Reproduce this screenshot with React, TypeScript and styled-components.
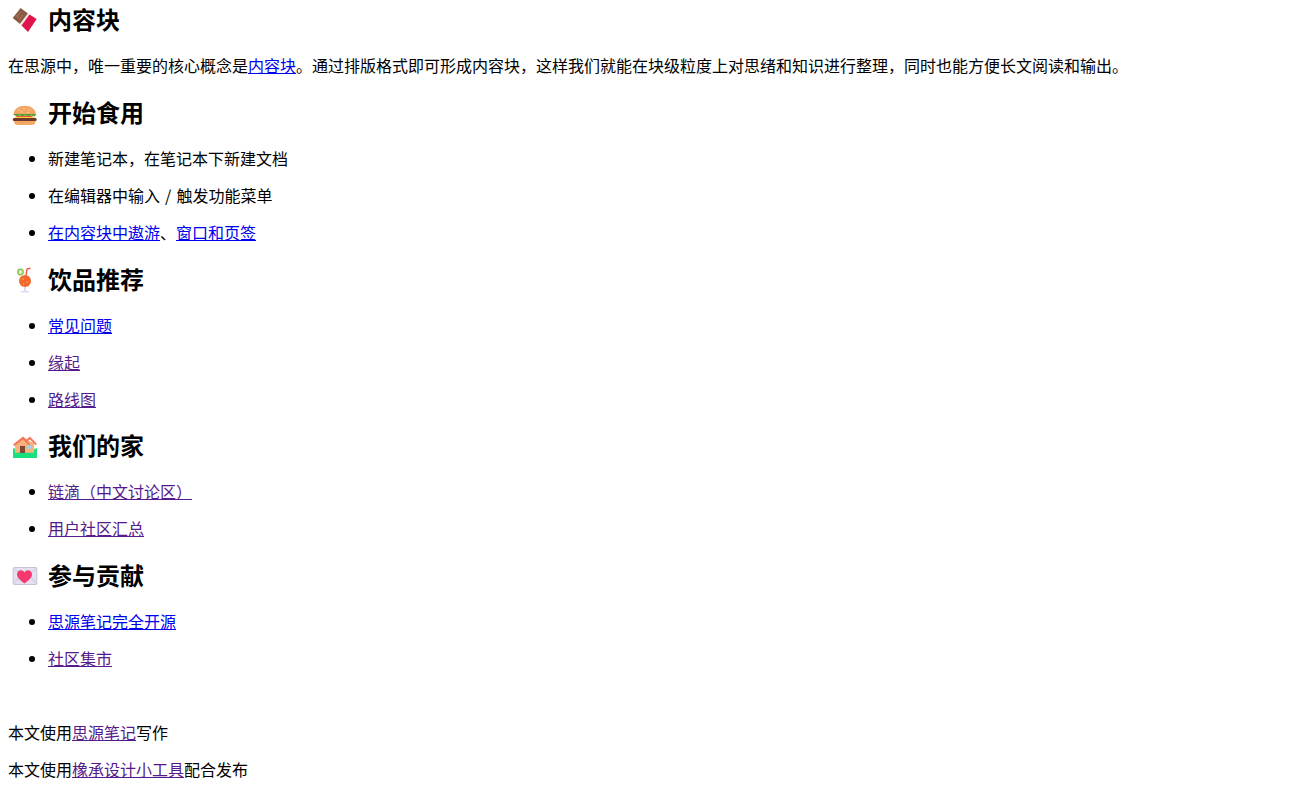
import React from "react";
import styled, { createGlobalStyle } from "styled-components";

const GlobalStyle = createGlobalStyle`
  html, body {
    margin: 0;
    background: #fff;
  }
  body {
    padding: 8px;
    color: #000;
    font-family: "Noto Sans CJK SC", "Liberation Serif", serif;
    font-size: 16px;
    font-weight: 400;
    line-height: 21px;
  }
`;

const Heading = styled.h2`
  display: flex;
  align-items: center;
  gap: 8px;
  height: 32px;
  margin: 19.92px 0;
  font-size: 24px;
  font-weight: 700;
  line-height: 32px;

  &:first-child {
    margin-top: -5px;
  }
`;

const Emoji = styled.svg`
  display: block;
  flex: none;
  width: 32px;
  height: 32px;
  margin-top: 4px;
`;

const Para = styled.p`
  margin: 16px 0;
  height: 21px;
  white-space: nowrap;
`;

const List = styled.ul`
  margin: 16px 0;
  padding-left: 40px;
`;

const Item = styled.li<{ $wide?: boolean }>`
  margin: 16px 0;
  height: 21px;
  word-spacing: ${(p) => (p.$wide ? "1.5px" : "0")};
`;

const Link = styled.a<{ $visited?: boolean }>`
  color: ${(p) => (p.$visited ? "#551a8b" : "#0000ee")};
  text-decoration: underline;
`;

function Chocolate() {
  return (
    <Emoji viewBox="0 0 32 32">
      <path d="M12.600 3 20 8.500 12 19 4.700 13z" fill="#8a5a44" />
      <path d="M9 11.500 13 7M12 14l3-4M7.500 10l5 4" stroke="#a8775f" strokeWidth="1" fill="none" />
      <path d="M20 8.500 21.500 9.500 13.500 20.500 12 19z" fill="#efe3da" />
      <path d="M21.500 9.500 28.700 14 20 27 13.500 20.500z" fill="#e0144c" />
    </Emoji>
  );
}

function Burger() {
  return (
    <Emoji viewBox="0 0 32 32">
      <path d="M5.500 17c0-6 5-9.300 11.200-9.300S28 11 28 17z" fill="#f4a764" />
      <circle cx="11" cy="12" r=".7" fill="#ffdcae" />
      <circle cx="16" cy="10.500" r=".7" fill="#ffdcae" />
      <circle cx="21" cy="12" r=".7" fill="#ffdcae" />
      <circle cx="14" cy="14" r=".7" fill="#ffdcae" />
      <circle cx="20" cy="14.500" r=".7" fill="#ffdcae" />
      <path d="M5 16h23.500l-2 2.500-3-1-3 1-3-1-3 1-3-1-3 1z" fill="#5c9e31" />
      <path d="M8 18h17l-1.500 1.500h-14z" fill="#f0583a" />
      <path d="M6 19h21.500l-2 1H7.500z" fill="#ffc83d" />
      <rect x="4.700" y="20" width="24" height="3" rx="1.500" fill="#6b3a2a" />
      <path d="M6 23h21.500c0 2.800-1.500 4-4 4H10c-2.500 0-4-1.200-4-4z" fill="#f4a764" />
    </Emoji>
  );
}

function Drink() {
  return (
    <Emoji viewBox="0 0 32 32">
      <circle cx="12.500" cy="7" r="3.400" fill="#8bc34a" />
      <circle cx="12.500" cy="7" r="2" fill="#dcedc8" />
      <path d="M18 11 19 4 22.500 3.200" stroke="#e8503a" strokeWidth="1.300" fill="none" />
      <circle cx="17" cy="16" r="6" fill="#f4682c" />
      <circle cx="15" cy="14" r=".7" fill="#ffb74d" />
      <circle cx="19" cy="17" r=".7" fill="#ffb74d" />
      <circle cx="15.500" cy="19" r=".7" fill="#ffb74d" />
      <path d="M16.200 22h1.600v4h-1.600z" fill="#cfd6f5" />
      <path d="M13 26h8v1.500h-8z" fill="#d6dcf5" />
    </Emoji>
  );
}

function House() {
  return (
    <Emoji viewBox="0 0 32 32">
      <path d="M5 17c4 2 8 3 12 3s8-1 12-3v10H5z" fill="#17e07f" />
      <path d="M7 12 15 6l6 4 5 2v9.700H7z" fill="#f8b27a" />
      <path d="M5 13.500 15 5.500l3.500 3L22 5.500l7 7.500-1.300 1.300L22 8.500l-2.500 2 3 3-1.300 1.300L15 8.500 6.300 15z" fill="#f07b5a" />
      <rect x="12" y="15" width="5" height="7" fill="#7b4a36" />
      <rect x="19" y="14" width="4" height="4" rx="1" fill="#9fd4f0" />
    </Emoji>
  );
}

function Letter() {
  return (
    <Emoji viewBox="0 0 32 32">
      <rect x="5.200" y="6.500" width="23.600" height="17" rx="1" fill="#e4e0ef" stroke="#c8c2d8" strokeWidth="1" />
      <path d="M5.500 7.500 17 16.500 28.500 7.500M5.500 23 13 14M28.500 23 21 14" stroke="#c4bdd6" strokeWidth=".8" fill="none" />
      <path d="M16.500 22.500c-3.200-2.600-7.500-5.500-7.500-9 0-2.400 1.800-4.300 3.900-4.300 1.500 0 2.800.8 3.600 2.200.8-1.400 2.100-2.200 3.600-2.200 2.100 0 3.900 1.900 3.900 4.300 0 3.500-4.300 6.400-7.500 9z" fill="#f7386e" />
    </Emoji>
  );
}

export default function App() {
  return (
    <>
      <GlobalStyle />
      <Heading>
        <Chocolate />
        内容块
      </Heading>
      <Para>
        在思源中，唯一重要的核心概念是<Link href="#a">内容块</Link>
        。通过排版格式即可形成内容块，这样我们就能在块级粒度上对思绪和知识进行整理，同时也能方便长文阅读和输出。
      </Para>
      <Heading>
        <Burger />
        开始食用
      </Heading>
      <List>
        <Item>新建笔记本，在笔记本下新建文档</Item>
        <Item $wide>在编辑器中输入 / 触发功能菜单</Item>
        <Item>
          <Link href="#b">在内容块中遨游</Link>、<Link href="#c">窗口和页签</Link>
        </Item>
      </List>
      <Heading>
        <Drink />
        饮品推荐
      </Heading>
      <List>
        <Item>
          <Link href="#d">常见问题</Link>
        </Item>
        <Item>
          <Link $visited href="#e">缘起</Link>
        </Item>
        <Item>
          <Link $visited href="#f">路线图</Link>
        </Item>
      </List>
      <Heading>
        <House />
        我们的家
      </Heading>
      <List>
        <Item>
          <Link $visited href="#g">链滴（中文讨论区）</Link>
        </Item>
        <Item>
          <Link $visited href="#h">用户社区汇总</Link>
        </Item>
      </List>
      <Heading>
        <Letter />
        参与贡献
      </Heading>
      <List>
        <Item>
          <Link href="#i">思源笔记完全开源</Link>
        </Item>
        <Item>
          <Link $visited href="#j">社区集市</Link>
        </Item>
      </List>
      <Para />
      <Para>
        本文使用<Link $visited href="#k">思源笔记</Link>写作
      </Para>
      <Para>
        本文使用<Link $visited href="#l">橡承设计小工具</Link>配合发布
      </Para>
    </>
  );
}
